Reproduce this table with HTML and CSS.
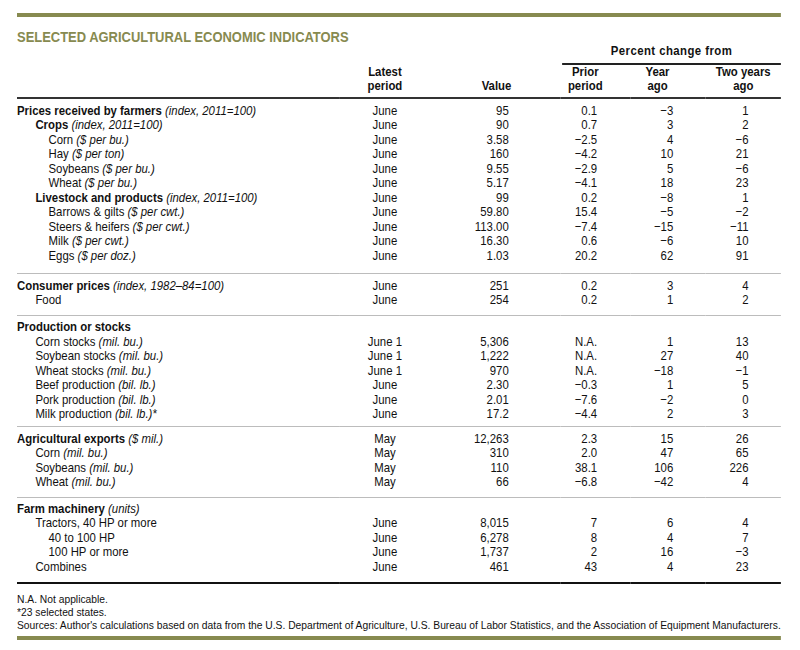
FILE: index.html
```html
<!DOCTYPE html>
<html lang="en">
<head>
<meta charset="utf-8">
<title>Selected Agricultural Economic Indicators</title>
<link rel="stylesheet" href="styles.css">
</head>
<body>
<div class="page">
  <div class="rule-olive"></div>
  <h1 class="title">SELECTED AGRICULTURAL ECONOMIC INDICATORS</h1>
  <table class="ind">
    <colgroup>
      <col class="c-label"><col class="c-latest"><col class="c-value"><col class="c-prior"><col class="c-year"><col class="c-two">
    </colgroup>
    <thead>
      <tr class="h1">
        <th></th><th></th><th></th>
        <th colspan="3" class="pct"><span>Percent change from</span></th>
      </tr>
      <tr class="h2">
        <th></th>
        <th class="hl">Latest<br>period</th>
        <th class="hv">Value</th>
        <th class="hp">Prior<br>period</th>
        <th class="hy">Year<br>ago</th>
        <th class="ht">Two years<br>ago</th>
      </tr>
    </thead>
    <tbody class="first">
      <tr><td class="l0"><b>Prices received by farmers</b> <i>(index, 2011=100)</i></td><td>June</td><td>95</td><td>0.1</td><td>−3</td><td>1</td></tr>
      <tr><td class="l1"><b>Crops</b> <i>(index, 2011=100)</i></td><td>June</td><td>90</td><td>0.7</td><td>3</td><td>2</td></tr>
      <tr><td class="l2">Corn <i>($ per bu.)</i></td><td>June</td><td>3.58</td><td>−2.5</td><td>4</td><td>−6</td></tr>
      <tr><td class="l2">Hay <i>($ per ton)</i></td><td>June</td><td>160</td><td>−4.2</td><td>10</td><td>21</td></tr>
      <tr><td class="l2">Soybeans <i>($ per bu.)</i></td><td>June</td><td>9.55</td><td>−2.9</td><td>5</td><td>−6</td></tr>
      <tr><td class="l2">Wheat <i>($ per bu.)</i></td><td>June</td><td>5.17</td><td>−4.1</td><td>18</td><td>23</td></tr>
      <tr><td class="l1"><b>Livestock and products</b> <i>(index, 2011=100)</i></td><td>June</td><td>99</td><td>0.2</td><td>−8</td><td>1</td></tr>
      <tr><td class="l2">Barrows &amp; gilts <i>($ per cwt.)</i></td><td>June</td><td>59.80</td><td>15.4</td><td>−5</td><td>−2</td></tr>
      <tr><td class="l2">Steers &amp; heifers <i>($ per cwt.)</i></td><td>June</td><td>113.00</td><td>−7.4</td><td>−15</td><td>−11</td></tr>
      <tr><td class="l2">Milk <i>($ per cwt.)</i></td><td>June</td><td>16.30</td><td>0.6</td><td>−6</td><td>10</td></tr>
      <tr><td class="l2">Eggs <i>($ per doz.)</i></td><td>June</td><td>1.03</td><td>20.2</td><td>62</td><td>91</td></tr>
    </tbody>
    <tbody>
      <tr><td class="l0"><b>Consumer prices</b> <i>(index, 1982–84=100)</i></td><td>June</td><td>251</td><td>0.2</td><td>3</td><td>4</td></tr>
      <tr><td class="l1">Food</td><td>June</td><td>254</td><td>0.2</td><td>1</td><td>2</td></tr>
    </tbody>
    <tbody class="prod">
      <tr><td class="l0"><b>Production or stocks</b></td><td></td><td></td><td></td><td></td><td></td></tr>
      <tr><td class="l1">Corn stocks <i>(mil. bu.)</i></td><td>June 1</td><td>5,306</td><td>N.A.</td><td>1</td><td>13</td></tr>
      <tr><td class="l1">Soybean stocks <i>(mil. bu.)</i></td><td>June 1</td><td>1,222</td><td>N.A.</td><td>27</td><td>40</td></tr>
      <tr><td class="l1">Wheat stocks <i>(mil. bu.)</i></td><td>June 1</td><td>970</td><td>N.A.</td><td>−18</td><td>−1</td></tr>
      <tr><td class="l1">Beef production <i>(bil. lb.)</i></td><td>June</td><td>2.30</td><td>−0.3</td><td>1</td><td>5</td></tr>
      <tr><td class="l1">Pork production <i>(bil. lb.)</i></td><td>June</td><td>2.01</td><td>−7.6</td><td>−2</td><td>0</td></tr>
      <tr><td class="l1">Milk production <i>(bil. lb.)*</i></td><td>June</td><td>17.2</td><td>−4.4</td><td>2</td><td>3</td></tr>
    </tbody>
    <tbody>
      <tr><td class="l0"><b>Agricultural exports</b> <i>($ mil.)</i></td><td>May</td><td>12,263</td><td>2.3</td><td>15</td><td>26</td></tr>
      <tr><td class="l1">Corn <i>(mil. bu.)</i></td><td>May</td><td>310</td><td>2.0</td><td>47</td><td>65</td></tr>
      <tr><td class="l1">Soybeans <i>(mil. bu.)</i></td><td>May</td><td>110</td><td>38.1</td><td>106</td><td>226</td></tr>
      <tr><td class="l1">Wheat <i>(mil. bu.)</i></td><td>May</td><td>66</td><td>−6.8</td><td>−42</td><td>4</td></tr>
    </tbody>
    <tbody class="last">
      <tr><td class="l0"><b>Farm machinery</b> <i>(units)</i></td><td></td><td></td><td></td><td></td><td></td></tr>
      <tr><td class="l1">Tractors, 40 HP or more</td><td>June</td><td>8,015</td><td>7</td><td>6</td><td>4</td></tr>
      <tr><td class="l2">40 to 100 HP</td><td>June</td><td>6,278</td><td>8</td><td>4</td><td>7</td></tr>
      <tr><td class="l2">100 HP or more</td><td>June</td><td>1,737</td><td>2</td><td>16</td><td>−3</td></tr>
      <tr><td class="l1">Combines</td><td>June</td><td>461</td><td>43</td><td>4</td><td>23</td></tr>
    </tbody>
  </table>
  <div class="notes">
    <p>N.A. Not applicable.</p>
    <p>*23 selected states.</p>
    <p>Sources: Author's calculations based on data from the U.S. Department of Agriculture, U.S. Bureau of Labor Statistics, and the Association of Equipment Manufacturers.</p>
  </div>
  <div class="rule-olive"></div>
</div>
</body>
</html>
```
FILE: styles.css
```css
html, body {
  margin: 0;
  padding: 0;
  background: #fff;
}
body {
  overflow-x: hidden;
  font-family: "Liberation Sans", Arial, sans-serif;
  font-size: 13px;
  color: #111;
}
/* Condensed face emulated by compressing Liberation Sans horizontally */
.page {
  width: 873px;
  margin-left: 17px;
  padding-top: 13px;
  transform: scaleX(0.875);
  transform-origin: 0 0;
}
.rule-olive {
  height: 4px;
  background: #878a50;
}
.title {
  margin: 11px 0 0;
  font-size: 14.8px;
  line-height: 18px;
  font-weight: bold;
  color: #878a50;
}
.ind {
  width: 873px;
  border-collapse: collapse;
  table-layout: fixed;
}
.c-label { width: 369px; }
.c-latest { width: 103px; }
.c-value { width: 149px; }
.c-prior { width: 80px; }
.c-year { width: 86px; }
.c-two { width: 86px; }

.ind th {
  font-weight: bold;
  padding: 0;
  line-height: 14px;
  vertical-align: bottom;
}
.ind th.pct {
  padding-right: 8px;
  text-align: center;
}
.pct span {
  display: block;
  line-height: 10px;
  padding-bottom: 7px;
  letter-spacing: 0.5px;
  border-bottom: 2px solid #222;
  margin-right: -8px;
  margin-left: 2px;
}
.h2 th { padding-top: 0; padding-bottom: 4px; }
.ind th.hl { text-align: center; }
.ind th.hv { text-align: right; padding-right: 56px; }
.ind th.hp { text-align: center; padding-right: 23px; }
.ind th.hy { text-align: center; padding-right: 24px; }
.ind th.ht { text-align: center; }
.ind thead { border-bottom: 2px solid #333; }

.ind td {
  padding: 0;
  line-height: 14.5px;
  height: 14.5px;
  white-space: nowrap;
}
.ind td:nth-child(2) { text-align: center; }
.ind td:nth-child(3) { text-align: right; padding-right: 59px; }
.ind td:nth-child(4) { text-align: right; padding-right: 38px; }
.ind td:nth-child(5) { text-align: right; padding-right: 37px; }
.ind td:nth-child(6) { text-align: right; padding-right: 37px; }
.ind tbody + tbody { border-top: 1px solid #bcbcbc; }
.ind tbody tr:first-child td { padding-top: 4.5px; }
.ind tbody tr:last-child td { padding-bottom: 7.5px; }
.ind tbody.first tr:last-child td { padding-bottom: 10px; }
.ind tbody.prod tr:first-child td { padding-top: 4px; }
.ind tbody.prod tr:last-child td { padding-bottom: 4.5px; }
.ind tbody.last tr:first-child td { padding-top: 3.5px; }
.ind tbody.last tr:last-child td { padding-bottom: 7.5px; }
.ind tbody.last { border-bottom: 2px solid #111; }

.ind td.l1 { padding-left: 21px; }
.ind td.l2 { padding-left: 36px; }

.notes {
  padding: 8.5px 0 5px;
  font-size: 11.75px;
}
.notes p {
  margin: 0;
  line-height: 13px;
  white-space: nowrap;
}
```
